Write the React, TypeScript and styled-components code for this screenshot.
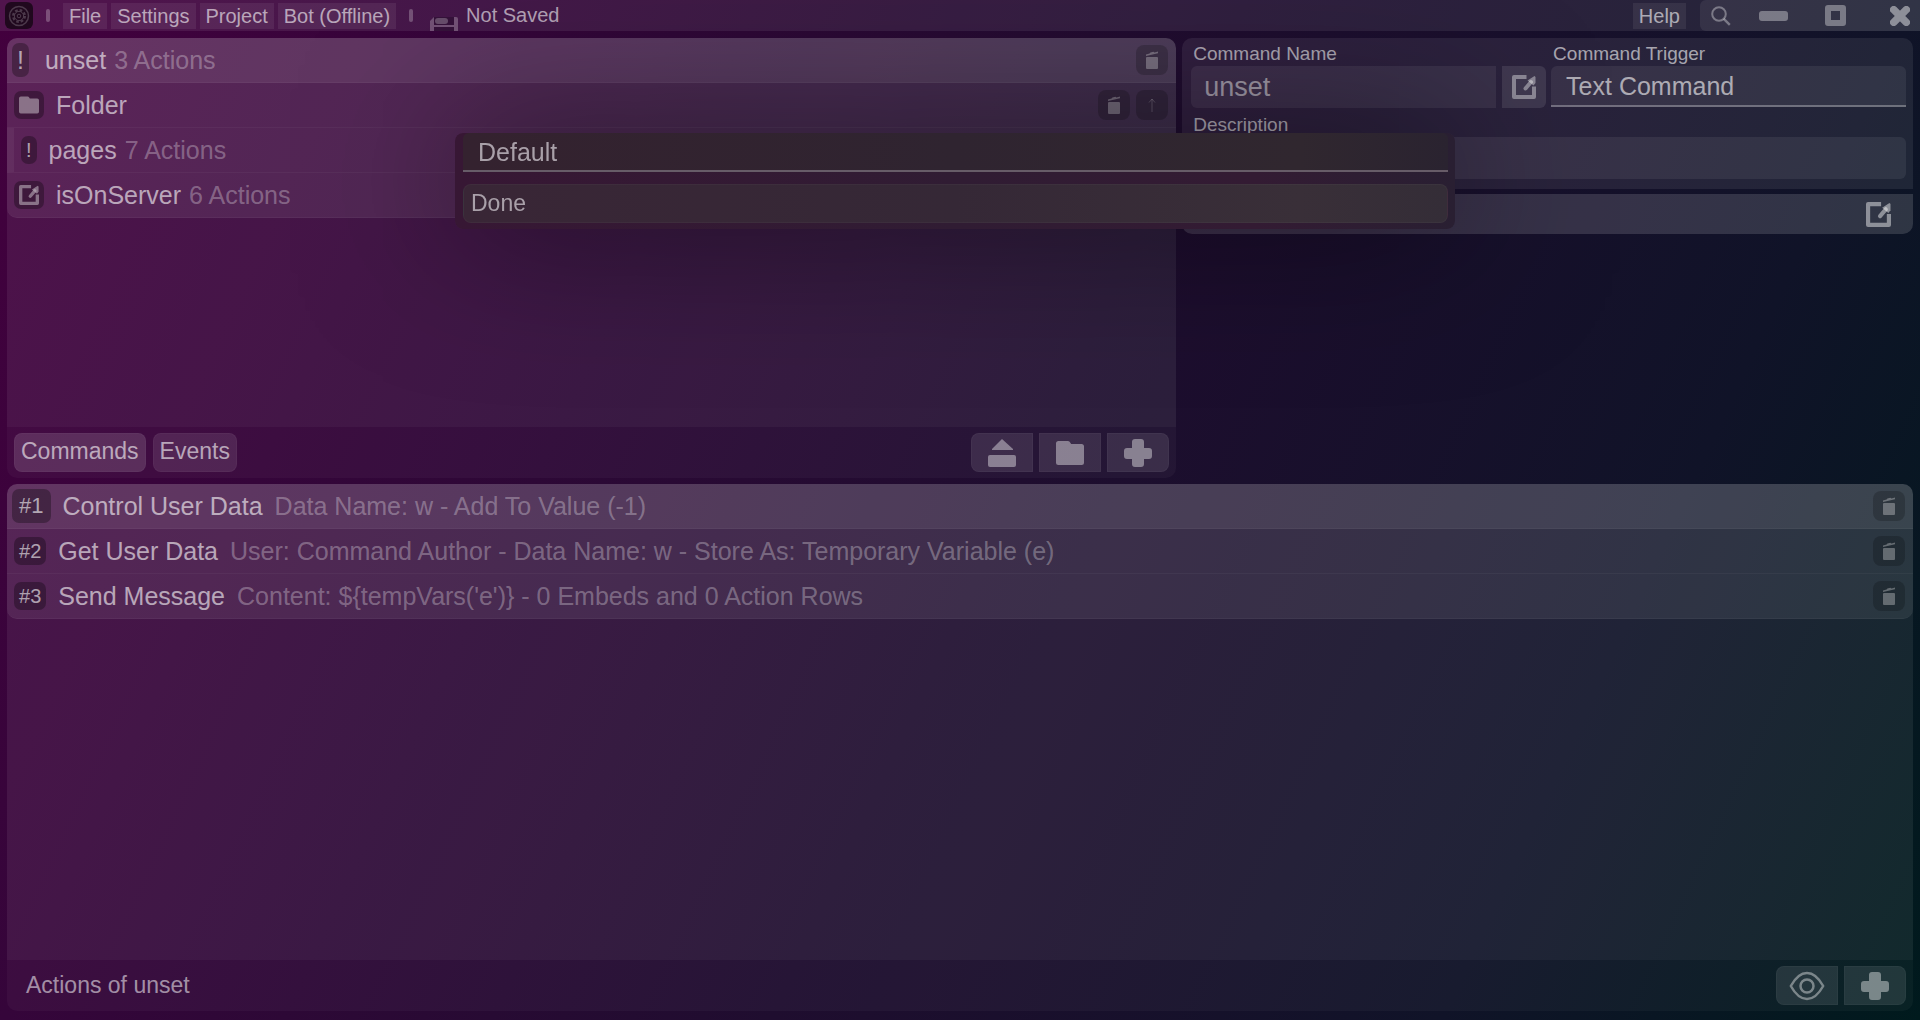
import React from "react";
import styled, { createGlobalStyle, css } from "styled-components";

const GlobalStyle = createGlobalStyle`
  *, *::before, *::after { box-sizing: border-box; }
  html, body { margin: 0; height: 100%; }
  body {
    overflow: hidden;
    background: linear-gradient(115deg, #43003e 0%, #35053a 20%, #1f0d2f 52%, #101328 80%, #001a1d 100%) fixed;
    color: rgba(255, 255, 255, 0.6);
    font-family: "Liberation Sans", Arial, sans-serif;
  }
  button, input, select {
    margin: 0;
    border: 0;
    color: inherit;
    font-family: inherit;
    appearance: none;
    outline: none;
  }
`;

const Shell = styled.div`
  display: flex;
  flex-direction: column;
  height: 100vh;
`;

const TopBar = styled.header`
  display: flex;
  align-items: center;
  justify-content: space-between;
  flex: none;
  height: 31px;
  background: rgba(255, 255, 255, 0.08);
  font-size: 20px;
`;

const BarGroup = styled.div`
  display: flex;
  align-items: center;
  gap: 13px;
  height: 100%;
  padding-left: 5px;
`;

const Menu = styled.nav`
  display: flex;
  gap: 4px;
`;

const MenuButton = styled.button`
  height: 26px;
  padding: 0 6px;
  background: rgba(255, 255, 255, 0.07);
  font-size: 20px;
  line-height: 26px;
`;

const Logo = styled.span`
  display: flex;
  align-items: center;
  justify-content: center;
  width: 28px;
  height: 27px;
  border-radius: 6px;
  background: rgba(0, 0, 0, 0.6);
`;

const Divider = styled.span`
  width: 4px;
  height: 13px;
  border-radius: 2px;
  background: rgba(255, 255, 255, 0.25);
`;

const SaveState = styled.div`
  display: flex;
  gap: 8px;
  height: 100%;
  padding-left: 4px;
  line-height: 30px;

  svg { align-self: flex-end; }
`;

const BarEnd = styled.div`
  display: flex;
  align-items: center;
  gap: 14px;
  height: 100%;
`;

const WindowControls = styled.div`
  display: grid;
  grid-template-columns: 42px 62px 62px 1fr;
  width: 220px;
  height: 100%;
  border-radius: 6px 0 0 6px;
  background: rgba(255, 255, 255, 0.07);
`;

const ControlButton = styled.button`
  display: flex;
  align-items: center;
  justify-content: center;
  padding: 0;
  background: none;
  color: rgba(255, 255, 255, 0.35);

  &:last-child {
    justify-content: flex-end;
    padding-right: 10px;
    color: rgba(255, 255, 255, 0.45);
  }
`;

const Main = styled.main`
  display: grid;
  flex: 1;
  grid-template-columns: 1.6fr 1fr;
  grid-template-rows: 440fr 527fr;
  gap: 6px;
  min-height: 0;
  padding: 7px 7px 9px;
`;

const Panel = styled.section<{ $wide?: boolean }>`
  display: flex;
  flex-direction: column;
  min-height: 0;
  overflow: hidden;
  border-radius: 10px;
  ${(p) => p.$wide && css`grid-column: 1 / -1;`}
`;

const List = styled.ul`
  flex: 1;
  min-height: 0;
  margin: 0;
  padding: 0;
  background: rgba(255, 255, 255, 0.07);
  list-style: none;
`;

const Row = styled.li<{ $selected?: boolean; $nested?: boolean }>`
  display: flex;
  align-items: center;
  height: 45px;
  padding: 0 8px 0 ${(p) => (p.$selected ? 5 : 7)}px;
  border-bottom: 1px solid rgba(255, 255, 255, 0.04);
  background: rgba(255, 255, 255, ${(p) => (p.$selected ? 0.14 : 0.075)});
  font-size: 25px;
  ${(p) => p.$nested && css`border-left: 7px solid rgba(255, 255, 255, 0.05);`}

  &:last-child { border-radius: 0 0 10px 10px; }
`;

const Tag = styled.span<{ $large?: boolean; $mark?: boolean }>`
  display: flex;
  align-items: center;
  justify-content: center;
  flex: none;
  height: ${(p) => (p.$large ? 34 : 28)}px;
  margin-right: ${(p) => (p.$large && p.$mark ? 16 : 12)}px;
  padding: 0 5px;
  border-radius: 7px;
  background: rgba(0, 0, 0, 0.3);
  font-size: ${(p) => (p.$large ? (p.$mark ? 25 : 22) : 20)}px;

  ${(p) => p.$large && !p.$mark && css`padding: 0 7px;`}

  svg { opacity: 0.65; }
`;

const Detail = styled.span<{ $gap: number }>`
  flex: 1;
  margin-left: ${(p) => p.$gap}px;
  overflow: hidden;
  color: rgba(255, 255, 255, 0.3);
  text-overflow: ellipsis;
  white-space: nowrap;
`;

const RowButton = styled.button<{ $faint?: boolean }>`
  display: flex;
  align-items: center;
  justify-content: center;
  flex: none;
  width: 32px;
  height: 30px;
  margin-left: 6px;
  padding: 0;
  border-radius: 8px;
  background: rgba(0, 0, 0, 0.2);
  color: rgba(255, 255, 255, ${(p) => (p.$faint ? 0.2 : 0.3)});
`;

const Footer = styled.footer`
  display: flex;
  align-items: center;
  justify-content: space-between;
  flex: none;
  padding: 6px 7px;
  background: rgba(255, 255, 255, 0.035);
`;

const TabGroup = styled.div`
  display: flex;
  gap: 7px;
`;

const Tab = styled.button<{ $active?: boolean }>`
  height: 39px;
  padding: 0 6px 3px;
  border: 1px solid rgba(255, 255, 255, 0.03);
  border-radius: 8px;
  background: rgba(255, 255, 255, ${(p) => (p.$active ? 0.14 : 0.1)});
  font-size: 23px;
`;

const ToolGroup = styled.div`
  display: flex;
  gap: 6px;
`;

const Tool = styled.button`
  display: flex;
  align-items: center;
  justify-content: center;
  width: 62px;
  height: 39px;
  padding: 0;
  border: 1px solid rgba(255, 255, 255, 0.03);
  background: rgba(255, 255, 255, 0.1);
  color: rgba(255, 255, 255, 0.4);

  &:first-child { border-radius: 8px 0 0 8px; }
  &:last-child { border-radius: 0 8px 8px 0; }
`;

const FooterTitle = styled.span`
  padding-left: 12px;
  color: rgba(255, 255, 255, 0.55);
  font-size: 23px;
`;

const Side = styled.aside`
  display: flex;
  flex-direction: column;
  gap: 5px;
`;

const Form = styled.form`
  display: grid;
  grid-template-columns: 1fr 1fr;
  gap: 5px;
  padding: 4px 7px 10px 9px;
  border-radius: 10px 10px 0 0;
  background: rgba(255, 255, 255, 0.08);
`;

const Field = styled.div<{ $full?: boolean }>`
  display: flex;
  flex-direction: column;
  min-width: 0;
  ${(p) => p.$full && css`grid-column: 1 / -1;`}
`;

const Label = styled.label`
  padding-left: 2px;
  font-size: 19px;
  line-height: 24px;
`;

const InputLine = styled.div`
  display: flex;
  gap: 6px;
`;

const TextInput = styled.input<{ $joined?: boolean }>`
  flex: 1;
  min-width: 0;
  height: 42px;
  padding: 0 13px;
  border-radius: ${(p) => (p.$joined ? "6px 0 0 6px" : "6px")};
  background: rgba(255, 255, 255, 0.07);
  color: rgba(255, 255, 255, 0.5);
  font-size: 27px;
`;

const OpenButton = styled.button`
  display: flex;
  align-items: center;
  justify-content: center;
  width: 44px;
  height: 42px;
  padding: 0;
  border-radius: 0 6px 6px 0;
  background: rgba(255, 255, 255, 0.1);
  color: rgba(255, 255, 255, 0.4);
`;

const Select = styled.select`
  width: 100%;
  height: 41px;
  padding: 0 15px;
  border-bottom: 2px solid rgba(255, 255, 255, 0.3);
  border-radius: 6px 6px 0 0;
  background: rgba(255, 255, 255, 0.07);
  font-size: 25px;

  option { color: #222; }
`;

const OptionsBar = styled.button`
  display: flex;
  align-items: center;
  justify-content: flex-end;
  height: 40px;
  padding: 0 22px;
  border-radius: 0 0 10px 10px;
  background: rgba(255, 255, 255, 0.14);
  color: rgba(255, 255, 255, 0.45);
`;

const Overlay = styled.div`
  position: fixed;
  inset: 0;
  display: flex;
  align-items: flex-start;
  justify-content: center;
  padding: 133px 10px 0 0;
`;

const Dialog = styled.div`
  display: flex;
  flex-direction: column;
  gap: 12px;
  width: 1000px;
  max-width: 100%;
  padding: 0 7px 6px 8px;
  border-radius: 8px;
  background: linear-gradient(90deg, #371734 0%, #301c33 50%, #331b33 80%, #291f32 100%);
  box-shadow: 0 0 150px rgba(0, 0, 0, 0.5);
`;

const DialogSelect = styled(Select)`
  height: 39px;
  border-color: #675c68;
  background: linear-gradient(90deg, #34222f, #2f2430 50%, #30272f 85%, #2a2330);
  color: #a9a0a9;
`;

const DoneButton = styled.button`
  height: 39px;
  padding: 0 7px;
  border: 1px solid rgba(255, 255, 255, 0.03);
  border-radius: 8px;
  background: linear-gradient(90deg, #392636, #352836 50%, #392f38 85%, #342d37);
  color: #a9a0a9;
  font-size: 23px;
  text-align: left;
`;

const TrashIcon = () => (
  <svg width="14" height="18" viewBox="0 0 14 18" fill="currentColor" aria-hidden="true">
    <rect x="1" y="6" width="12" height="12" rx="1" />
    <path d="M1 3.4 4.6 2.6 5.4 1.5 8.4 .8 9.4 1.500 13 .6V2.200L1 5z" />
  </svg>
);

const ArrowUpIcon = () => (
  <svg width="8" height="14" viewBox="0 0 8 14" fill="none" stroke="currentColor" aria-hidden="true">
    <path d="M4 14V1M1 4.5 4 1l3 3.5" />
  </svg>
);

const FolderIcon = ({ size }: { size: number }) => (
  <svg width={size} height={size} viewBox="0 0 28 28" fill="currentColor" aria-hidden="true">
    <path d="M2.500 2H12q1.500 0 2.500 2l.6 1H25.500q2.500 0 2.500 2.500V23.500q0 2.500-2.500 2.500H2.500Q0 26 0 23.500V4.500Q0 2 2.500 2z" />
  </svg>
);

const ExportIcon = ({ size }: { size: number }) => (
  <svg width={size} height={size} viewBox="0 0 24 24" fill="none" stroke="currentColor" aria-hidden="true">
    <path d="M14.500 2H2V22H22V11.500" strokeWidth="4" strokeLinejoin="round" />
    <path d="M13.500 13.500 19 7" strokeWidth="4" strokeLinecap="round" />
    <path d="M15.500 5.500 22.500 1 23.500 2V8L21.500 10.500z" fill="currentColor" stroke="none" />
  </svg>
);

const PlusIcon = () => (
  <svg width="28" height="28" viewBox="0 0 28 28" fill="currentColor" aria-hidden="true">
    <path d="M11 0h6q3 0 3 3v6h5q3 0 3 3v5q0 3-3 3h-5v5q0 3-3 3h-6q-3 0-3-3v-5H3q-3 0-3-3v-5q0-3 3-3h5V3q0-3 3-3z" />
  </svg>
);

const EjectIcon = () => (
  <svg width="28" height="28" viewBox="0 0 28 28" fill="currentColor" aria-hidden="true">
    <path d="M14 0 25 10V11H4V10z" />
    <rect y="16" width="28" height="12" rx="2" />
  </svg>
);

const EyeIcon = () => (
  <svg width="36" height="30" viewBox="0 0 36 30" fill="none" stroke="currentColor" strokeWidth="2.500" aria-hidden="true">
    <path d="M1.800 15Q9 2 18 2T34.200 15Q27 28 18 28T1.800 15z" strokeLinejoin="round" />
    <circle cx="18" cy="15" r="6.500" />
  </svg>
);

const LogoIcon = () => (
  <svg width="22" height="22" viewBox="0 0 22 22" fill="none" stroke="rgba(255,255,255,.2)" aria-hidden="true">
    <circle cx="11" cy="11" r="9.500" strokeWidth="1.500" />
    <circle cx="11" cy="11" r="6" strokeWidth="2" strokeDasharray="2.700 2" />
    <circle cx="11" cy="11" r="4.600" />
    <circle cx="11" cy="11" r="1.800" />
  </svg>
);

const FloppyIcon = () => (
  <svg width="28" height="14" viewBox="0 0 28 14" aria-hidden="true">
    <path d="M4 0H26Q28 0 28 2V14H0V4z" fill="rgba(255,255,255,.25)" />
    <path d="M4 0H24V8H4zM4 10H24V14H4z" fill="#35123a" />
    <rect x="5" y="1" width="13" height="6" rx="3" fill="rgba(255,255,255,.25)" />
  </svg>
);

const SearchIcon = () => (
  <svg width="20" height="20" viewBox="0 0 20 20" fill="none" stroke="currentColor" strokeWidth="2" aria-hidden="true">
    <circle cx="8" cy="8" r="6.800" />
    <path d="m12.800 12.800 6 6" strokeWidth="2.400" />
  </svg>
);

const MinimizeIcon = () => (
  <svg width="29" height="10" viewBox="0 0 29 10" fill="currentColor" aria-hidden="true">
    <rect width="29" height="10" rx="3" />
  </svg>
);

const MaximizeIcon = () => (
  <svg width="21" height="21" viewBox="0 0 21 21" fill="none" stroke="currentColor" aria-hidden="true">
    <rect x="3" y="3" width="15" height="15" strokeWidth="6" strokeLinejoin="round" />
  </svg>
);

const CloseIcon = () => (
  <svg width="20" height="20" viewBox="0 0 20 20" fill="none" stroke="currentColor" strokeWidth="7.500" aria-hidden="true">
    <path d="M3.700 3.700 16.300 16.300M16.300 3.700 3.700 16.300" strokeLinecap="round" />
  </svg>
);

type Command = {
  name: string;
  detail?: string;
  kind: "text" | "folder" | "link";
  nested?: boolean;
};

const commands: Command[] = [
  { name: "unset", detail: "3 Actions", kind: "text" },
  { name: "Folder", kind: "folder" },
  { name: "pages", detail: "7 Actions", kind: "text", nested: true },
  { name: "isOnServer", detail: "6 Actions", kind: "link" },
];

const actions = [
  { name: "Control User Data", detail: "Data Name: w - Add To Value (-1)" },
  { name: "Get User Data", detail: "User: Command Author - Data Name: w - Store As: Temporary Variable (e)" },
  { name: "Send Message", detail: "Content: ${tempVars('e')} - 0 Embeds and 0 Action Rows" },
];

const kindMark = {
  text: "!",
  folder: <FolderIcon size={20} />,
  link: <ExportIcon size={20} />,
};

export default function App() {
  return (
    <>
      <GlobalStyle />
      <Shell>
        <TopBar>
          <BarGroup>
            <Logo><LogoIcon /></Logo>
            <Divider />
            <Menu>
              {["File", "Settings", "Project", "Bot (Offline)"].map((item) => (
                <MenuButton key={item} type="button">{item}</MenuButton>
              ))}
            </Menu>
            <Divider />
            <SaveState><FloppyIcon />Not Saved</SaveState>
          </BarGroup>
          <BarEnd>
            <MenuButton type="button">Help</MenuButton>
            <WindowControls>
              <ControlButton type="button" aria-label="Search"><SearchIcon /></ControlButton>
              <ControlButton type="button" aria-label="Minimize"><MinimizeIcon /></ControlButton>
              <ControlButton type="button" aria-label="Maximize"><MaximizeIcon /></ControlButton>
              <ControlButton type="button" aria-label="Close"><CloseIcon /></ControlButton>
            </WindowControls>
          </BarEnd>
        </TopBar>

        <Main>
          <Panel>
            <List>
              {commands.map((c, i) => (
                <Row key={c.name} $selected={i === 0} $nested={c.nested}>
                  <Tag $large={i === 0} $mark={c.kind === "text"}>{kindMark[c.kind]}</Tag>
                  <span>{c.name}</span>
                  <Detail $gap={8}>{c.detail}</Detail>
                  <RowButton type="button" aria-label={`Delete ${c.name}`}><TrashIcon /></RowButton>
                  {c.kind === "folder" && (
                    <RowButton type="button" $faint aria-label="Collapse folder"><ArrowUpIcon /></RowButton>
                  )}
                </Row>
              ))}
            </List>
            <Footer>
              <TabGroup>
                <Tab type="button" $active>Commands</Tab>
                <Tab type="button">Events</Tab>
              </TabGroup>
              <ToolGroup>
                <Tool type="button" aria-label="Import"><EjectIcon /></Tool>
                <Tool type="button" aria-label="New folder"><FolderIcon size={28} /></Tool>
                <Tool type="button" aria-label="New command"><PlusIcon /></Tool>
              </ToolGroup>
            </Footer>
          </Panel>

          <Side>
            <Form onSubmit={(e) => e.preventDefault()}>
              <Field>
                <Label htmlFor="command-name">Command Name</Label>
                <InputLine>
                  <TextInput id="command-name" defaultValue="unset" $joined />
                  <OpenButton type="button" aria-label="Open command"><ExportIcon size={24} /></OpenButton>
                </InputLine>
              </Field>
              <Field>
                <Label htmlFor="command-trigger">Command Trigger</Label>
                <Select id="command-trigger">
                  <option>Text Command</option>
                </Select>
              </Field>
              <Field $full>
                <Label htmlFor="command-description">Description</Label>
                <InputLine>
                  <TextInput id="command-description" />
                </InputLine>
              </Field>
            </Form>
            <OptionsBar type="button" aria-label="Command options"><ExportIcon size={25} /></OptionsBar>
          </Side>

          <Panel $wide>
            <List>
              {actions.map((a, i) => (
                <Row key={a.name} $selected={i === 0}>
                  <Tag $large={i === 0}>#{i + 1}</Tag>
                  <span>{a.name}</span>
                  <Detail $gap={12}>{a.detail}</Detail>
                  <RowButton type="button" aria-label={`Delete ${a.name}`}><TrashIcon /></RowButton>
                </Row>
              ))}
            </List>
            <Footer>
              <FooterTitle>Actions of unset</FooterTitle>
              <ToolGroup>
                <Tool type="button" aria-label="Preview"><EyeIcon /></Tool>
                <Tool type="button" aria-label="Add action"><PlusIcon /></Tool>
              </ToolGroup>
            </Footer>
          </Panel>
        </Main>
      </Shell>

      <Overlay>
        <Dialog role="dialog" aria-label="Command settings">
          <DialogSelect aria-label="Mode">
            <option>Default</option>
          </DialogSelect>
          <DoneButton type="button">Done</DoneButton>
        </Dialog>
      </Overlay>
    </>
  );
}
